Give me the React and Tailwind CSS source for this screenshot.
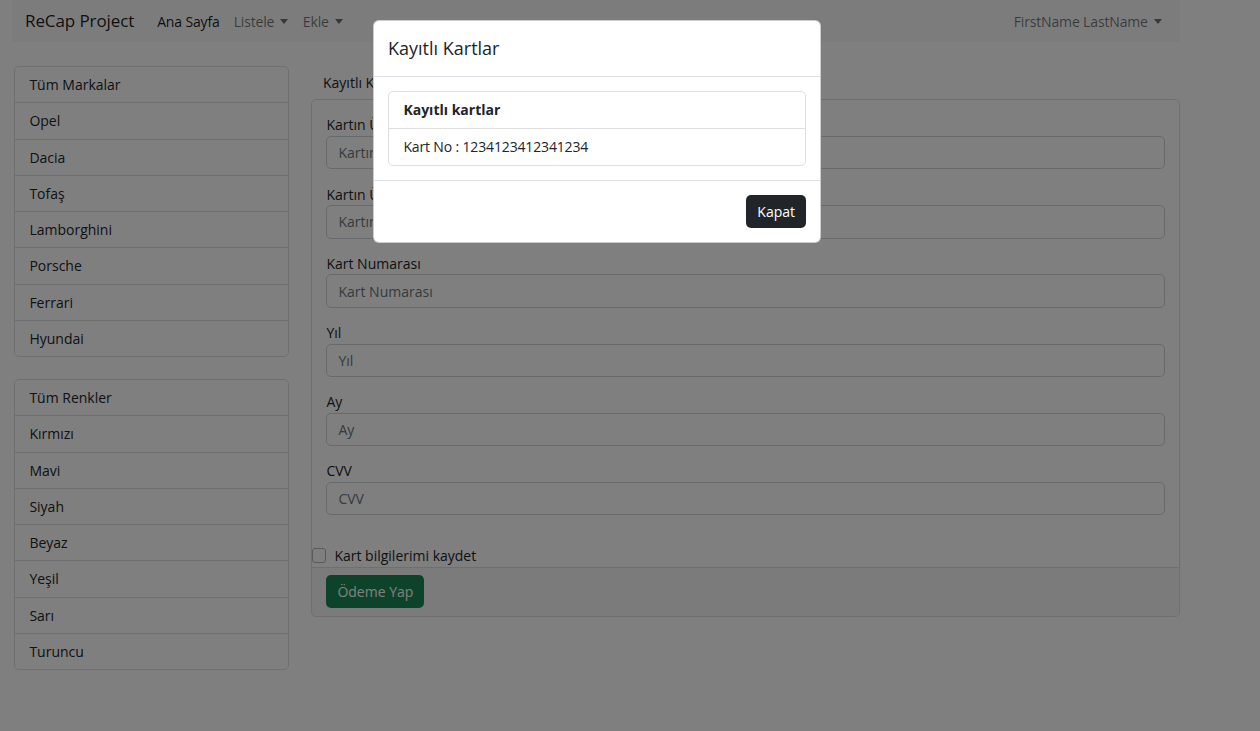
import React from 'react';

const brands = ['Tüm Markalar', 'Opel', 'Dacia', 'Tofaş', 'Lamborghini', 'Porsche', 'Ferrari', 'Hyundai'];
const colors = ['Tüm Renkler', 'Kırmızı', 'Mavi', 'Siyah', 'Beyaz', 'Yeşil', 'Sarı', 'Turuncu'];

const fields = [
  { label: 'Kartın Üzerindeki İsim', ph: 'Kartın Üzerindeki İsim' },
  { label: 'Kartın Üzerindeki Soyisim', ph: 'Kartın Üzerindeki Soyisim' },
  { label: 'Kart Numarası', ph: 'Kart Numarası' },
  { label: 'Yıl', ph: 'Yıl' },
  { label: 'Ay', ph: 'Ay' },
  { label: 'CVV', ph: 'CVV' },
];

const Caret = () => (
  <span className="inline-block w-0 h-0 ml-[6px] align-middle border-x-[4px] border-x-transparent border-t-[5px] border-t-current" />
);

const ListGroup = ({ items, className = '' }) => (
  <div className={`border border-[#dfdfdf] rounded-[5px] ${className}`}>
    {items.map((item, i) => (
      <div
        key={item}
        className={`px-[14.4px] py-[7px] leading-[21.25px] text-[#212529] ${i > 0 ? 'border-t border-[#dfdfdf]' : ''}`}
      >
        {item}
      </div>
    ))}
  </div>
);

export default function App() {
  return (
    <div className="relative w-[1260px] h-[731px] overflow-hidden bg-white font-['Open_Sans',sans-serif] text-[14px] text-[#212529]">
      {/* Navbar */}
      <nav className="ml-[12px] w-[1168px] h-[42px] bg-[#f8f9fa] flex items-center pl-[13px] pr-[11px]">
        <span className="text-[17px] text-black/90 mr-[16px] tracking-[-0.1px]">ReCap Project</span>
        <div className="flex items-center tracking-[-0.15px]">
          <span className="px-[7px] text-black/90">Ana Sayfa</span>
          <span className="px-[7px] text-black/55 flex items-center">Listele<Caret /></span>
          <span className="px-[7.5px] text-black/55 flex items-center">Ekle<Caret /></span>
        </div>
        <span className="ml-auto px-[7.2px] text-black/55 flex items-center tracking-[-0.15px]">FirstName LastName<Caret /></span>
      </nav>

      {/* Content */}
      <div className="flex mt-[24px] ml-[14px]">
        <div className="w-[275px] shrink-0">
          <ListGroup items={brands} />
          <ListGroup items={colors} className="mt-[22px]" />
        </div>

        <div className="ml-[22px] w-[869px]">
          <div className="h-[33px] px-[12px] flex items-center">Kayıtlı Kartlar</div>
          <div className="border border-[#dfdfdf] rounded-[5px]">
            <div className="p-[14.4px]">
              {fields.map((f) => (
                <div key={f.label} className="mb-[14.2px]">
                  <label className="block leading-[21.6px]">{f.label}</label>
                  <div className="h-[33.4px] border border-[#ced4da] rounded-[5px] px-[11px] flex items-center text-[#6c757d]">
                    {f.ph}
                  </div>
                </div>
              ))}
            </div>
            <div className="flex items-center h-[23px]">
              <span className="w-[14.4px] h-[14.4px] border border-[#adb5bd] rounded-[3px] bg-white" />
              <span className="ml-[8px] leading-[21.6px]">Kart bilgilerimi kaydet</span>
            </div>
            <div className="border-t border-[#dfdfdf] bg-black/[0.03] px-[14.4px] py-[7.4px] rounded-b-[5px]">
              <button className="h-[33px] px-[11px] bg-[#198754] text-white rounded-[5px]">Ödeme Yap</button>
            </div>
          </div>
        </div>
      </div>

      {/* Backdrop */}
      <div className="absolute inset-0 bg-black/50" />

      {/* Modal */}
      <div className="absolute left-[373px] top-[20px] w-[448px] bg-white rounded-[6px] border border-black/20">
        <div className="px-[14px] h-[56px] flex items-center border-b border-[#dee2e6]">
          <h5 className="text-[18px] font-medium leading-[27px] text-[#212529]">Kayıtlı Kartlar</h5>
        </div>
        <div className="p-[14px]">
          <div className="border border-[#dfdfdf] rounded-[5px]">
            <div className="px-[14.4px] py-[7.2px] leading-[21.6px] font-bold border-b border-[#dfdfdf]">Kayıtlı kartlar</div>
            <div className="px-[14.4px] py-[7px] leading-[21.6px] tracking-[-0.15px]">Kart No : 1234123412341234</div>
          </div>
        </div>
        <div className="border-t border-[#dee2e6] px-[14px] py-[14px] flex justify-end">
          <button className="h-[33px] px-[11px] bg-[#212529] text-white rounded-[5px]">Kapat</button>
        </div>
      </div>
    </div>
  );
}
